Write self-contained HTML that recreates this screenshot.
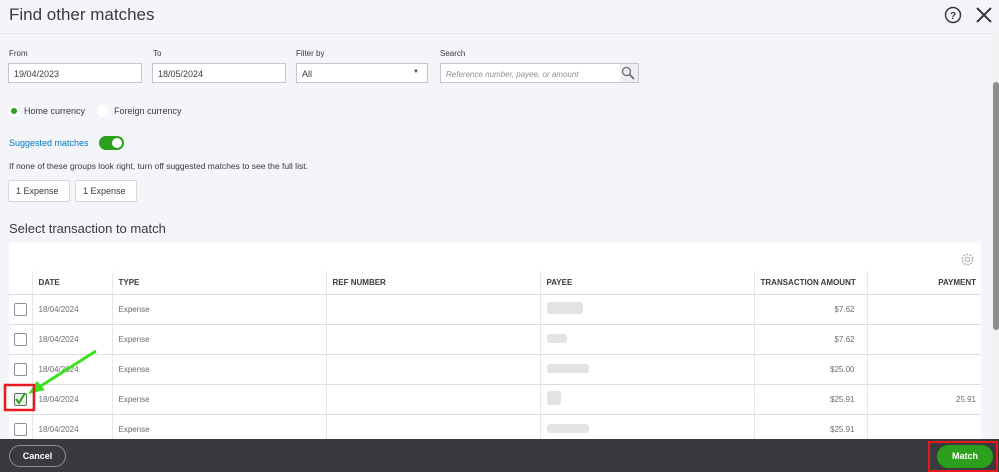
<!DOCTYPE html>
<html><head><style>
*{box-sizing:border-box;margin:0;padding:0}
body{width:999px;height:472px;overflow:hidden;background:#f4f5f8;font-family:"Liberation Sans",sans-serif;color:#393a3d;position:relative}
.abs{position:absolute}
.title{left:9px;top:5px;font-size:17px;color:#393a3d}
.hdrline{left:0;top:33px;width:990px;height:1px;background:#e6e7ea}
.lbl{font-size:8px;color:#393a3d;top:49px}
.inp{top:63px;height:20px;background:#fff;border:1px solid #c4c6cb;font-size:9px;padding:5px 5px;color:#393a3d}
.btn{top:180px;height:22px;background:#fff;border:1px solid #d4d7dc;font-size:9px;padding:5px 7px;border-radius:2px}
.card{left:9px;top:243px;width:972px;height:197px;background:#fff}
table{position:absolute;left:9px;top:271px;border-collapse:collapse;font-size:8px}
th{height:23px;text-align:left;font-weight:bold;font-size:8px;padding-left:6px;border-bottom:1px solid #dcdde0;border-left:1px solid #e6e7ea;color:#393a3d}
td{height:30px;padding-left:6px;border-bottom:1px solid #dcdde0;border-left:1px solid #e6e7ea;color:#6b6c72}
th:first-child,td:first-child{border-left:none}
.r{text-align:right;padding-right:12px}
.r2{text-align:right;padding-right:5px}
.cb{display:inline-block;width:13px;height:13px;border:1px solid #8d9096;border-radius:2px;background:#fff;vertical-align:middle;margin-left:-1px}
.blur{display:inline-block;height:9px;background:#e3e3e3;border-radius:3px}
.foot{left:0;top:439px;width:999px;height:33px;background:#393a3d}
</style></head><body>
<div class="abs title">Find other matches</div>
<svg class="abs" style="left:943px;top:5px" width="20" height="20" viewBox="0 0 20 20"><circle cx="10" cy="10" r="7.5" fill="none" stroke="#393a3d" stroke-width="1.5"/><text x="10" y="14" font-size="10" text-anchor="middle" fill="#393a3d" font-family="Liberation Sans" font-weight="bold">?</text></svg>
<svg class="abs" style="left:975px;top:6px" width="18" height="18" viewBox="0 0 18 18"><path d="M2 2L16 16M16 2L2 16" stroke="#393a3d" stroke-width="2"/></svg>
<div class="abs hdrline"></div>
<div class="abs lbl" style="left:9px">From</div>
<div class="abs lbl" style="left:153px">To</div>
<div class="abs lbl" style="left:296px">Filter by</div>
<div class="abs lbl" style="left:440px">Search</div>
<div class="abs inp" style="left:8px;width:134px">19/04/2023</div>
<div class="abs inp" style="left:152px;width:134px">18/05/2024</div>
<div class="abs inp" style="left:296px;width:132px;font-size:9px">All<span style="position:absolute;right:8px;top:5px;font-size:6px">▼</span></div>
<div class="abs inp" style="left:440px;width:199px;font-style:italic;color:#8d9096;font-size:8px;padding-top:6px">Reference number, payee, or amount
<div style="position:absolute;right:0;top:0;width:18px;height:18px;background:#eceef1"></div>
<svg style="position:absolute;right:3px;top:2px" width="14" height="14" viewBox="0 0 14 14"><circle cx="5.5" cy="5.5" r="4" fill="none" stroke="#6b6c72" stroke-width="1.3"/><path d="M8.5 8.5L13 13" stroke="#6b6c72" stroke-width="1.8"/></svg></div>
<div class="abs" style="left:8px;top:105px;width:12px;height:12px;border-radius:50%;background:#fff"><div style="margin:3px;width:6px;height:6px;border-radius:50%;background:#2ca01c"></div></div>
<div class="abs" style="left:24px;top:106px;font-size:9px">Home currency</div>
<div class="abs" style="left:97px;top:105px;width:12px;height:12px;border-radius:50%;background:#fff"></div>
<div class="abs" style="left:114px;top:106px;font-size:9px">Foreign currency</div>
<div class="abs" style="left:9px;top:138px;font-size:9px;color:#0077c5">Suggested matches</div>
<div class="abs" style="left:99px;top:136px;width:25px;height:14px;border-radius:7px;background:#2ca01c"><div style="position:absolute;right:2px;top:2px;width:10px;height:10px;border-radius:50%;background:#fff"></div></div>
<div class="abs" style="left:9px;top:161px;font-size:8.5px">If none of these groups look right, turn off suggested matches to see the full list.</div>
<div class="abs btn" style="left:8px;width:62px">1 Expense</div>
<div class="abs btn" style="left:75px;width:62px">1 Expense</div>
<div class="abs" style="left:9px;top:221px;font-size:13px">Select transaction to match</div>
<div class="abs card"></div>
<svg class="abs" style="left:960px;top:252px" width="15" height="15" viewBox="0 0 16 16"><circle cx="8" cy="8" r="2.5" fill="none" stroke="#aaa" stroke-width="1"/><circle cx="8" cy="8" r="5.5" fill="none" stroke="#aaa" stroke-width="1.6" stroke-dasharray="2 1.5"/></svg>
<table>
<tr><th style="width:23px"></th><th style="width:80px">DATE</th><th style="width:214px">TYPE</th><th style="width:214px">REF NUMBER</th><th style="width:214px">PAYEE</th><th style="width:113px">TRANSACTION AMOUNT</th><th style="width:114px" class="r2">PAYMENT</th></tr>
<tr><td><span class="cb"></span></td><td>18/04/2024</td><td>Expense</td><td></td><td><span class="blur" style="width:36px;height:12px"></span></td><td class="r">$7.62</td><td></td></tr>
<tr><td><span class="cb"></span></td><td>18/04/2024</td><td>Expense</td><td></td><td><span class="blur" style="width:20px"></span></td><td class="r">$7.62</td><td></td></tr>
<tr><td><span class="cb"></span></td><td>18/04/2024</td><td>Expense</td><td></td><td><span class="blur" style="width:42px"></span></td><td class="r">$25.00</td><td></td></tr>
<tr><td><span class="cb" style="background:#e6f4e3;border-color:#6b6c72"></span></td><td>18/04/2024</td><td>Expense</td><td></td><td><span class="blur" style="width:14px;height:14px"></span></td><td class="r">$25.91</td><td class="r2">25.91</td></tr>
<tr><td><span class="cb"></span></td><td>18/04/2024</td><td>Expense</td><td></td><td><span class="blur" style="width:42px"></span></td><td class="r">$25.91</td><td></td></tr>
</table>
<svg class="abs" style="left:0;top:340px" width="110" height="80" viewBox="0 0 110 80"><polyline points="16,59 19,63 25,53" fill="none" stroke="#2ca01c" stroke-width="2"/><path d="M96 11L36 49" stroke="#3ee01c" stroke-width="3"/><path d="M28 54L45 50L37 41Z" fill="#3ee01c"/><rect x="5" y="45" width="29" height="25" fill="none" stroke="#e8191e" stroke-width="2.5"/></svg>
<div class="abs" style="left:991px;top:33px;width:8px;height:407px;background:#f1f1f1"></div>
<div class="abs" style="left:993px;top:82px;width:6px;height:248px;background:#8d8d8d;border-radius:3px"></div>
<div class="abs foot"></div>
<div class="abs" style="left:9px;top:445px;width:57px;height:22px;border:1px solid #8d9096;border-radius:11px;color:#fff;font-size:9px;font-weight:bold;text-align:center;line-height:20px">Cancel</div>
<div class="abs" style="left:928px;top:441px;width:70px;height:31px;border:2.5px solid #e8191e"></div>
<div class="abs" style="left:937px;top:445px;width:56px;height:23px;border-radius:12px;background:#2ca01c;color:#fff;font-size:9px;font-weight:bold;text-align:center;line-height:23px">Match</div>
</body></html>
